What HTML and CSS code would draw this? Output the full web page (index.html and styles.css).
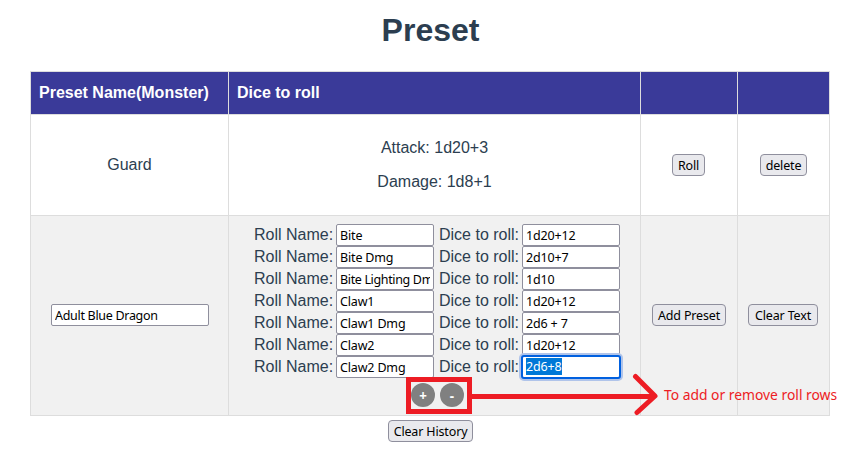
FILE: index.html
```html
<!DOCTYPE html>
<html lang="en">
<head>
<meta charset="utf-8">
<title>Preset</title>
<link rel="stylesheet" href="styles.css">
</head>
<body>
<main class="page">
<h1>Preset</h1>
<table class="presets">
<colgroup><col class="c-name"><col class="c-dice"><col class="c-act"><col class="c-del"></colgroup>
<thead><tr><th>Preset Name(Monster)</th><th>Dice to roll</th><th></th><th></th></tr></thead>
<tbody>
<tr class="saved"><td>Guard</td><td><p>Attack: 1d20+3</p><p>Damage: 1d8+1</p></td><td><button class="btn roll">Roll</button></td><td><button class="btn delete">delete</button></td></tr>
<tr class="editor">
<td><input class="field preset-name" value="Adult Blue Dragon"></td>
<td class="rolls">
<div class="roll-row"><span class="l1">Roll Name:</span><input class="field" value="Bite"><span class="l2">Dice to roll:</span><input class="field" value="1d20+12"></div>
<div class="roll-row"><span class="l1">Roll Name:</span><input class="field" value="Bite Dmg"><span class="l2">Dice to roll:</span><input class="field" value="2d10+7"></div>
<div class="roll-row"><span class="l1">Roll Name:</span><input class="field long" value="Bite Lighting Dmg"><span class="l2">Dice to roll:</span><input class="field" value="1d10"></div>
<div class="roll-row"><span class="l1">Roll Name:</span><input class="field" value="Claw1"><span class="l2">Dice to roll:</span><input class="field" value="1d20+12"></div>
<div class="roll-row"><span class="l1">Roll Name:</span><input class="field" value="Claw1 Dmg"><span class="l2">Dice to roll:</span><input class="field" value="2d6 + 7"></div>
<div class="roll-row"><span class="l1">Roll Name:</span><input class="field" value="Claw2"><span class="l2">Dice to roll:</span><input class="field" value="1d20+12"></div>
<div class="roll-row"><span class="l1">Roll Name:</span><input class="field" value="Claw2 Dmg"><span class="l2">Dice to roll:</span><div class="field active" contenteditable="true"><span class="selected">2d6+8</span></div></div>
<div class="round-buttons"><button class="round">+</button><button class="round">-</button></div>
</td>
<td><button class="btn add">Add Preset</button></td>
<td><button class="btn clear-text">Clear Text</button></td>
</tr>
</tbody>
</table>
<button class="btn history">Clear History</button>
<svg class="callout" width="861" height="452" viewBox="0 0 861 452" fill="none" stroke="#ed1c24" stroke-width="5">
<rect x="408.500" y="379.500" width="61" height="32"/>
<path d="M472 396.500H655"/>
<path d="M635.500 376.500L655 396L637 412.500" stroke-linecap="round" stroke-linejoin="round"/>
</svg>
<div class="callout-text">To add or remove roll rows</div>
</main>
</body>
</html>
```
FILE: styles.css
```css
* { box-sizing: border-box; }
body { margin: 0; background: #fff; color: #2c3e50; font: 16px/18px "Liberation Sans", Arial, sans-serif; }
.page { position: relative; width: 861px; height: 452px; overflow: hidden; text-align: center; }
h1 { margin: 0; padding-top: 12px; height: 71px; font-size: 32px; line-height: 37px; }
.presets { width: 800px; margin-left: 30px; border-collapse: collapse; table-layout: fixed; }
.c-name { width: 198px; }
.c-dice { width: 412px; }
.c-act { width: 97px; }
.c-del { width: 92px; }
th, td { border: 1px solid #ddd; padding: 0 8px; vertical-align: middle; }
th { height: 43px; padding-bottom: 1px; background: #3a3a99; color: #fff; text-align: left; }
.saved { height: 101px; }
.saved p { margin: 0 0 16px; }
.saved p:last-child { margin: 0; }
.editor { height: 200px; background: #f1f1f1; }
.editor td { padding: 0 7px 2px; }
.editor .rolls { padding: 8px 0 0 25px; vertical-align: top; }
.btn { display: inline-block; height: 22px; padding: 1px 0 0; border: 1px solid #8f8f9d; border-radius: 4px; background: #e9e9ed; color: #000; font: 12.5px/19px "Noto Sans", sans-serif; letter-spacing: -.15px; white-space: nowrap; vertical-align: middle; }
.roll { width: 33px; margin-right: 1px; }
.delete { width: 47px; }
.add { width: 74px; }
.clear-text { width: 70px; margin-right: 1px; }
.history { display: block; width: 85px; margin: 4px 0 0 388px; }
.field { display: block; width: 98px; height: 22px; margin: 0; padding: 1px 3px 0; border: 1px solid #8f8f9d; border-radius: 2px; background: #fff; color: #000; font: 12.5px/19px "Noto Sans", sans-serif; letter-spacing: -.16px; text-align: left; outline: none; }
.long { letter-spacing: -.35px; }
.preset-name { width: 158px; margin: 0 auto 0 13px; letter-spacing: -.3px; }
.roll-row { display: flex; height: 22px; text-align: left; }
.l1 { width: 82px; line-height: 21px; }
.l2 { width: 88px; padding-left: 5px; line-height: 21px; }
.active { flex: none; width: 100px; height: 24px; margin: -1px; border: 2px solid #0060df; padding: 1px 3px 0; line-height: 19px; box-shadow: 0 0 0 2px #b0c4ea; border-radius: 3px; }
.selected { display: inline-block; height: 17px; background: #0078d7; color: #fff; line-height: 18px; vertical-align: top; }
.round-buttons { display: flex; gap: 5px; margin: 5px 0 0 157px; }
.round { width: 24px; height: 24px; padding: 1px 0 0; border: 0; border-radius: 50%; background: #808080; color: #fff; font: bold 13.333px/24px "Noto Sans", sans-serif; }
.callout { position: absolute; inset: 0; pointer-events: none; }
.callout-text { position: absolute; left: 664px; top: 386px; color: #ed1c24; font: 13.85px/18px "Noto Sans", sans-serif; white-space: nowrap; }
```
